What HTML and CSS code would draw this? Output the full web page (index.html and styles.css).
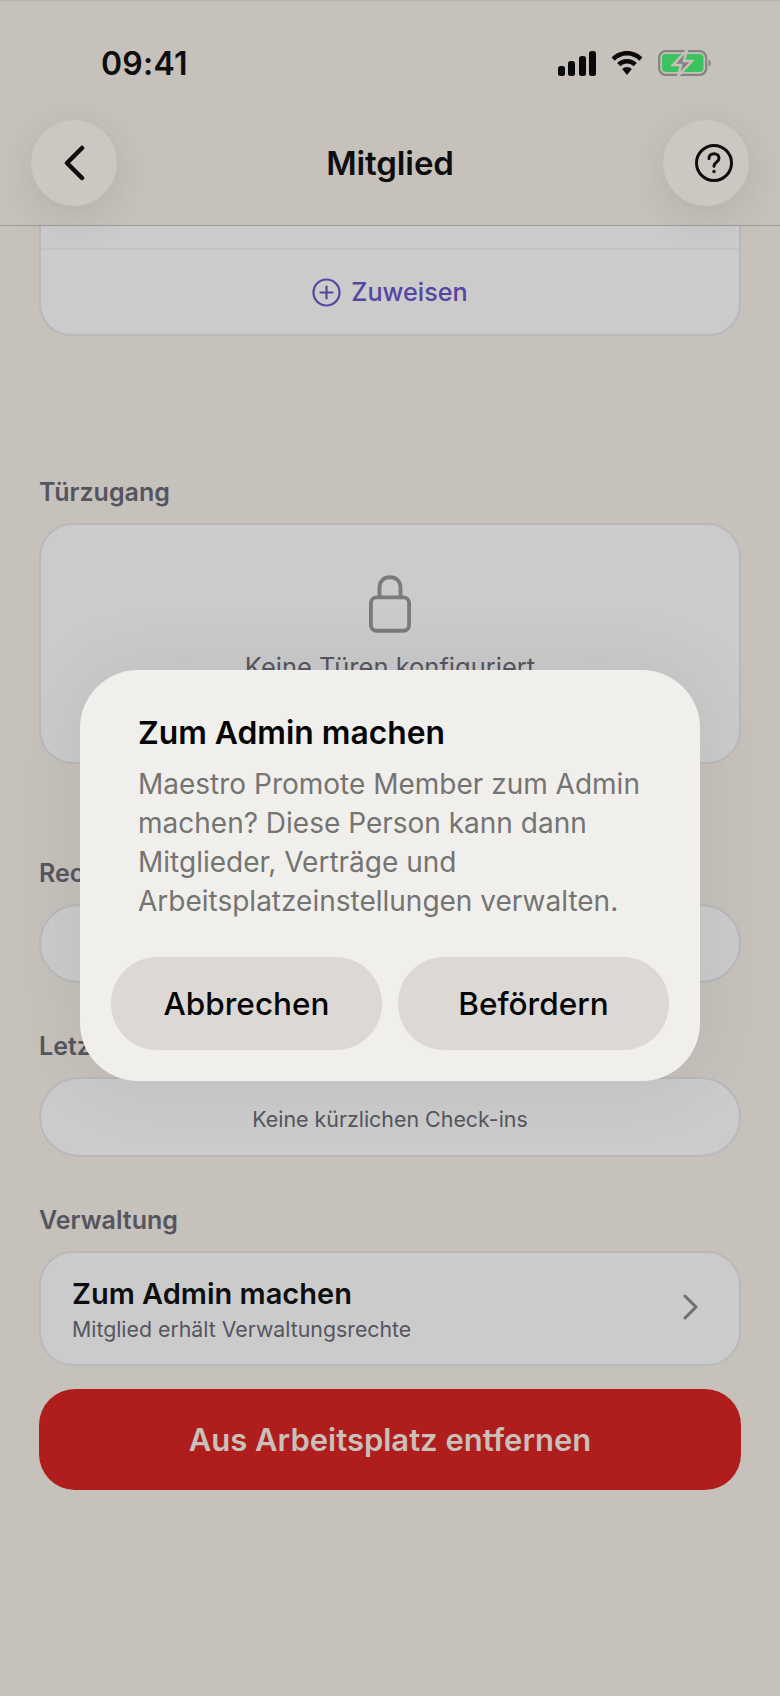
FILE: index.html
```html
<!doctype html>
<html lang="de">
<head>
<meta charset="utf-8">
<title>Mitglied</title>
<link rel="stylesheet" href="styles.css">
</head>
<body>
<div class="screen">

	<header class="topbar">
		<div class="status">
			<span class="clock">09:41</span>
			<div class="status-icons">
				<svg width="38" height="25" viewBox="0 0 38 25">
					<rect x="0" y="15" width="7" height="10" rx="2.5"/>
					<rect x="10" y="10" width="7" height="15" rx="2.5"/>
					<rect x="21" y="5" width="7" height="20" rx="2.5"/>
					<rect x="31" y="0" width="7" height="25" rx="2.5"/>
				</svg>
				<svg width="32" height="24" viewBox="0 0 32 24">
					<path d="M16 0C10 0 4.600 2.400.6 6.400l3.100 3.300C6.900 6.500 11.200 4.500 16 4.500s9.100 2 12.300 5.200l3.100-3.300C27.400 2.400 22 0 16 0z"/>
					<path d="M16 8c-3.800 0-7.300 1.500-9.800 4l3.100 3.300c1.700-1.700 4.100-2.800 6.700-2.800s5 1.100 6.700 2.800l3.100-3.300C23.300 9.500 19.800 8 16 8z"/>
					<path d="M16 16c-1.900 0-3.600.8-4.800 2l4.800 6 4.800-6c-1.200-1.200-2.900-2-4.800-2z"/>
				</svg>
				<svg class="battery" width="53" height="26" viewBox="0 0 53 26">
					<rect x="1.200" y="1.200" width="47" height="23.600" rx="6.500" fill="none" stroke="#85847f" stroke-width="2.200"/>
					<rect x="4" y="4" width="41.500" height="18" rx="4" fill="#3cc35f"/>
					<path d="M50.500 9.500c1.500.5 2.200 2 2.200 3.500s-.7 3-2.200 3.500z" fill="#85847f"/>
					<path d="M29 0L15 15h8l-3 11 14-15h-8l3-11z" fill="#85847f" stroke="#c6c1bb" stroke-width="2.500"/>
				</svg>
			</div>
		</div>
		<div class="nav">
			<button class="round-btn">
				<svg class="back" width="24" height="36" viewBox="0 0 24 36"><path d="M20 3L5 18l15 15"/></svg>
			</button>
			<h1>Mitglied</h1>
			<button class="round-btn help">
				<svg width="40" height="40" viewBox="0 0 40 40">
					<circle cx="20" cy="20" r="17.500"/>
					<path d="M15 15.500c0-3 2.200-4.800 5-4.800s5 1.800 5 4.500c0 3.800-5 4.200-5 8"/>
					<circle class="dot" cx="20" cy="28.500" r="1.700"/>
				</svg>
			</button>
		</div>
	</header>

	<main class="content">
		<section class="card assign">
			<div class="assign-top"></div>
			<div class="assign-row">
				<svg width="29" height="29" viewBox="0 0 29 29">
					<circle cx="14.500" cy="14.500" r="13"/>
					<path d="M14.500 8.500v12M8.500 14.500h12"/>
				</svg>
				<span>Zuweisen</span>
			</div>
		</section>

		<section class="group group-doors">
			<h2>Türzugang</h2>
			<div class="card doors">
				<svg class="lock" width="42" height="58" viewBox="0 0 44 60">
					<rect x="2" y="23" width="40" height="35" rx="6"/>
					<path d="M11 23V13C11 6 15.500 2 22 2s11 4 11 11v10"/>
				</svg>
				<p class="muted">Keine Türen konfiguriert</p>
			</div>
		</section>

		<section class="group group-invoices">
			<h2>Rechnungen</h2>
			<div class="card single"></div>
		</section>

		<section class="group">
			<h2>Letzte Check-ins</h2>
			<div class="card single checkins">
				<p class="muted small">Keine kürzlichen Check-ins</p>
			</div>
		</section>

		<section class="group">
			<h2>Verwaltung</h2>
			<div class="card promote">
				<div>
					<div class="promote-title">Zum Admin machen</div>
					<div class="promote-sub">Mitglied erhält Verwaltungsrechte</div>
				</div>
				<svg width="16" height="26" viewBox="0 0 16 26"><path d="M2 2l11 11L2 24"/></svg>
			</div>
		</section>

		<button class="danger">Aus Arbeitsplatz entfernen</button>
	</main>

	<div class="dialog">
		<h3>Zum Admin machen</h3>
		<p>Maestro Promote Member zum Admin machen? Diese Person kann dann Mitglieder, Verträge und Arbeitsplatzeinstellungen verwalten.</p>
		<div class="dialog-actions">
			<button>Abbrechen</button>
			<button>Befördern</button>
		</div>
	</div>

</div>
</body>
</html>
```

FILE: styles.css
```css
* {
	box-sizing: border-box;
}
html, body {
	margin: 0;
	padding: 0;
}
body {
	background-color: #c6c1bb;
	font-family: "Inter", "Liberation Sans", sans-serif;
	color: #0e0e10;
}
button {
	font-family: inherit;
	border: 0;
	padding: 0;
}
h1, h2, h3, p {
	margin: 0;
}
.screen {
	position: relative;
	width: 780px;
	height: 1696px;
	overflow: hidden;
	background-color: #c6c1bb;
	border-top: 1px solid #b9b4ae;
}

/* top bar */
.topbar {
	position: relative;
	z-index: 2;
	height: 225px;
	padding-top: 49px;
	border-bottom: 1px solid #9d9a95;
	background-color: #c6c1bb;
}
.status {
	display: flex;
	align-items: center;
	justify-content: space-between;
	height: 26px;
	padding: 0 69px 0 101px;
}
.clock {
	font-size: 32px;
	font-weight: 600;
	letter-spacing: 0.2px;
}
.status-icons {
	display: flex;
	align-items: center;
	gap: 15px;
}
.status-icons svg {
	fill: #0a0a0c;
}
.nav {
	display: flex;
	align-items: center;
	justify-content: space-between;
	margin-top: 44px;
	padding: 0 31px;
}
.nav h1 {
	font-size: 33px;
	font-weight: 600;
	letter-spacing: -0.1px;
}
.round-btn {
	display: flex;
	align-items: center;
	justify-content: center;
	width: 86px;
	height: 86px;
	border-radius: 50%;
	background-color: #cbc8c2;
	box-shadow: 0 10px 36px rgba(60, 60, 60, 0.12);
}
.round-btn svg {
	fill: none;
	stroke: #0e0e10;
	stroke-width: 3;
	stroke-linecap: round;
	stroke-linejoin: round;
}
.round-btn svg.back {
	stroke-width: 4.500;
}
.round-btn svg .dot {
	fill: #0e0e10;
	stroke: none;
}
.round-btn.help {
	padding-left: 16px;
}

/* page content */
.content {
	padding: 0 39px;
}
.card {
	background-color: #cbcbcb;
	border: 2px solid #b9b9bb;
	border-radius: 34px;
}
.assign {
	border-top: 0;
	border-radius: 0 0 32px 32px;
	height: 110px;
}
.assign-top {
	height: 24px;
	border-bottom: 2px solid #c3c3c3;
}
.assign-row {
	display: flex;
	align-items: center;
	justify-content: center;
	gap: 10px;
	height: 84px;
	font-size: 25.200px;
	font-weight: 500;
	color: #5546a3;
}
.assign-row svg {
	fill: none;
	stroke: #5546a3;
	stroke-width: 2.200;
	stroke-linecap: round;
}
.group {
	margin-top: 48px;
}
.group h2 {
	height: 30px;
	margin-bottom: 16px;
	font-size: 25px;
	line-height: 30px;
	font-weight: 600;
	color: #55555f;
}
.group-doors {
	margin-top: 141px;
}
.group-invoices {
	margin-top: 94px;
}
.doors {
	display: flex;
	flex-direction: column;
	align-items: center;
	height: 241px;
	padding-top: 50px;
}
.lock {
	fill: none;
	stroke: #7b7b7d;
	stroke-width: 4;
}
.muted {
	margin-top: 18px;
	font-size: 25.500px;
	color: #55555f;
}
.single {
	display: flex;
	align-items: center;
	justify-content: center;
	height: 79px;
	border-radius: 40px;
}
.checkins {
	height: 80px;
	padding-top: 3px;
}
.muted.small {
	margin-top: 0;
	font-size: 21.400px;
}
.promote {
	display: flex;
	align-items: center;
	justify-content: space-between;
	height: 115px;
	padding: 0 40px 0 31px;
}
.promote-title {
	font-size: 29px;
	font-weight: 600;
	line-height: 36px;
}
.promote-sub {
	margin-top: 4px;
	font-size: 21.300px;
	line-height: 26px;
	color: #55555f;
}
.promote svg {
	margin-bottom: 4px;
	fill: none;
	stroke: #6f6f73;
	stroke-width: 3;
	stroke-linecap: round;
	stroke-linejoin: round;
}
.danger {
	display: block;
	width: 702px;
	height: 101px;
	margin-top: 23px;
	border-radius: 36px;
	background-color: #af1d1d;
	color: #c8c0b9;
	font-size: 31px;
	font-weight: 600;
}

/* confirm dialog, lies over the page */
.dialog {
	position: absolute;
	z-index: 3;
	left: 80px;
	top: 669px;
	width: 620px;
	height: 411px;
	padding: 43px 31px 0;
	border-radius: 58px;
	background-color: #f0efec;
	box-shadow: 0 0 70px rgba(70, 70, 70, 0.1);
}
.dialog h3 {
	padding-left: 27px;
	font-size: 31.800px;
	line-height: 40px;
	font-weight: 600;
	color: #050507;
}
.dialog p {
	margin-top: 12px;
	padding: 0 10px 0 27px;
	font-size: 28px;
	line-height: 39px;
	color: #747472;
}
.dialog-actions {
	display: flex;
	gap: 16px;
	margin-top: 36px;
}
.dialog-actions button {
	flex: 1;
	height: 93px;
	border-radius: 46px;
	background-color: #dcd9d5;
	color: #050507;
	font-size: 31.500px;
	font-weight: 500;
}
```
